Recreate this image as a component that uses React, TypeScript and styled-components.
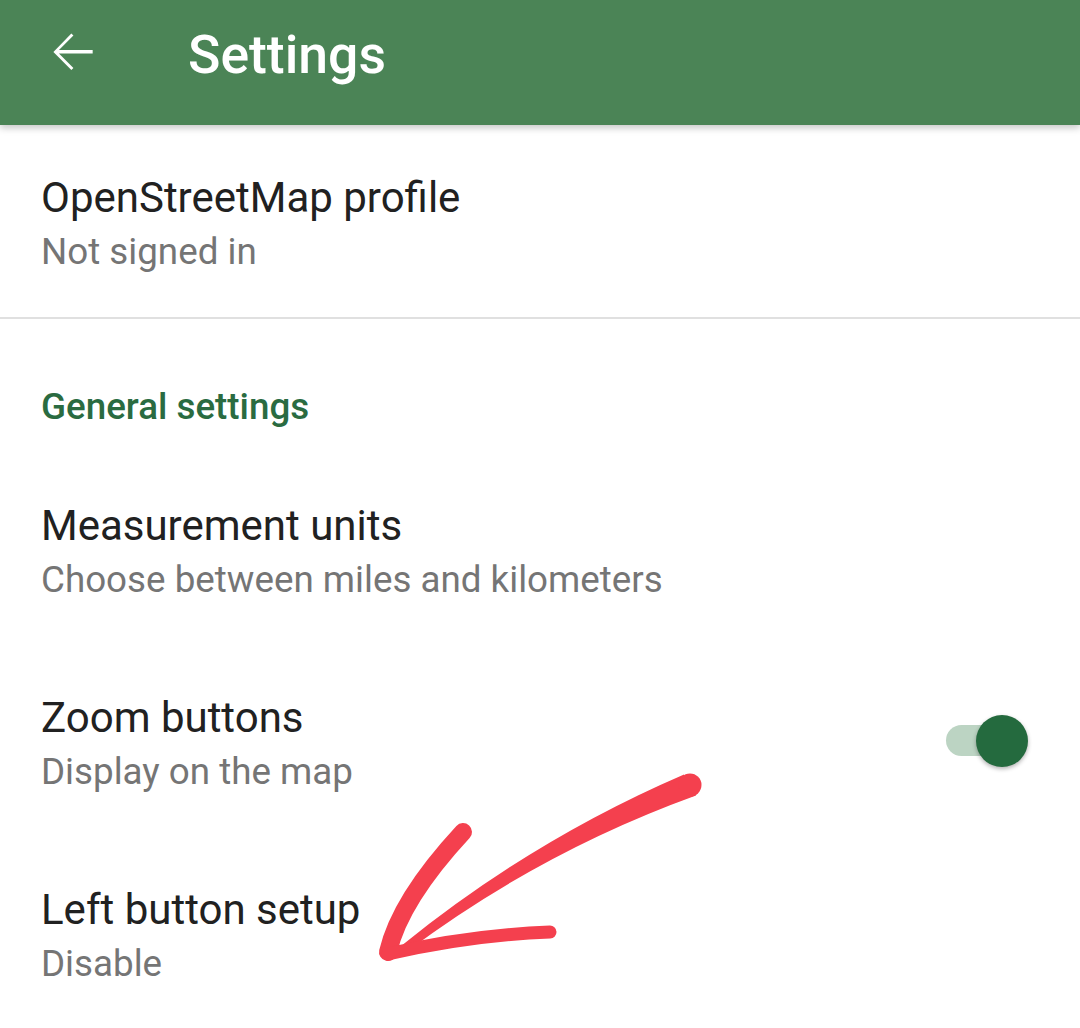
import React from 'react'
import styled, { createGlobalStyle } from 'styled-components'

const GlobalStyle = createGlobalStyle`
  body {
    margin: 0;
    background: #ffffff;
    font-family: Roboto, 'Noto Sans', Arial, sans-serif;
  }
`

const Page = styled.div`
  position: relative;
  width: 1080px;
  height: 1028px;
  overflow: hidden;
  background: #ffffff;
`

const AppBar = styled.header`
  position: relative;
  z-index: 1;
  display: flex;
  align-items: flex-start;
  height: 125px;
  padding-left: 41px;
  box-sizing: border-box;
  background: #4b8456;
  box-shadow: 0 3px 7px rgba(0, 0, 0, 0.22);
`

const BackButton = styled.button`
  width: 62px;
  height: 62px;
  margin-top: 21px;
  padding: 0;
  border: 0;
  background: transparent;
  color: #ffffff;
  display: flex;
`

const Title = styled.h1`
  margin: 25px 0 0 85px;
  font-size: 53.5px;
  line-height: 60px;
  font-weight: 500;
  color: #ffffff;
`

const Item = styled.div<{ $top: number; $bottom: number }>`
  display: flex;
  align-items: center;
  padding: ${(p) => p.$top}px 52px ${(p) => p.$bottom}px 41px;
`

const ItemText = styled.div`
  flex: 1;
`

const ItemTitle = styled.div`
  font-size: 42px;
  line-height: 50px;
  color: #212121;
`

const ItemSummary = styled.div`
  font-size: 36.75px;
  line-height: 58px;
  color: #757575;
`

const Divider = styled.hr`
  margin: 0;
  height: 2px;
  border: 0;
  background: #e0e0e0;
`

const Category = styled.div`
  padding: 63px 0 0 41px;
  margin-bottom: 27px;
  font-size: 36.75px;
  line-height: 50px;
  font-weight: 500;
  color: #2a6b41;
`

const Switch = styled.div`
  position: relative;
  width: 82px;
  height: 52px;
  margin-bottom: 13px;
`

const Track = styled.div`
  position: absolute;
  left: 0;
  top: 10px;
  width: 71px;
  height: 31px;
  border-radius: 16px;
  background: #bcd4c3;
`

const Thumb = styled.div`
  position: absolute;
  right: 0;
  top: 0;
  width: 52px;
  height: 52px;
  border-radius: 50%;
  background: #246a3e;
  box-shadow: 0 2px 4px rgba(0, 0, 0, 0.3);
`

const Annotation = styled.svg`
  position: absolute;
  left: 0;
  top: 0;
  pointer-events: none;
`

const BackArrow = () => (
  <svg width="62" height="62" viewBox="0 0 24 24" fill="currentColor">
    <path d="M20 11.2H6.95l5.6-5.6-.8-.8L4.8 12l6.95 6.95.8-.8-5.6-5.6H20z" />
  </svg>
)

const settings = [
  { title: 'Measurement units', summary: 'Choose between miles and kilometers' },
  { title: 'Zoom buttons', summary: 'Display on the map', toggle: true },
  { title: 'Left button setup', summary: 'Disable' },
]

const App = () => {
  return (
    <Page>
      <GlobalStyle />
      <AppBar>
        <BackButton aria-label="back">
          <BackArrow />
        </BackButton>
        <Title>Settings</Title>
      </AppBar>

      <Item $top={48} $bottom={36}>
        <ItemText>
          <ItemTitle>OpenStreetMap profile</ItemTitle>
          <ItemSummary>Not signed in</ItemSummary>
        </ItemText>
      </Item>
      <Divider />

      <Category>General settings</Category>
      {settings.map((s) => (
        <Item key={s.title} $top={42} $bottom={42}>
          <ItemText>
            <ItemTitle>{s.title}</ItemTitle>
            <ItemSummary>{s.summary}</ItemSummary>
          </ItemText>
          {s.toggle && (
            <Switch>
              <Track />
              <Thumb />
            </Switch>
          )}
        </Item>
      ))}

      <Annotation width="1080" height="1028" viewBox="0 0 1080 1028">
        <g fill="#f4404e" stroke="#f4404e" strokeLinecap="round" strokeLinejoin="round">
          <path
            d="M684,774.5 Q532,840 403,944.5 L407,951.5 Q540,852 696,795.5 Z"
            stroke="none"
          />
          <circle cx="690" cy="785" r="11.5" stroke="none" />
          <path d="M388,952 Q400,900 463,832" fill="none" strokeWidth="18" />
          <path d="M388,954 Q470,935 550,932" fill="none" strokeWidth="13" />
        </g>
      </Annotation>
    </Page>
  )
}

export default App
